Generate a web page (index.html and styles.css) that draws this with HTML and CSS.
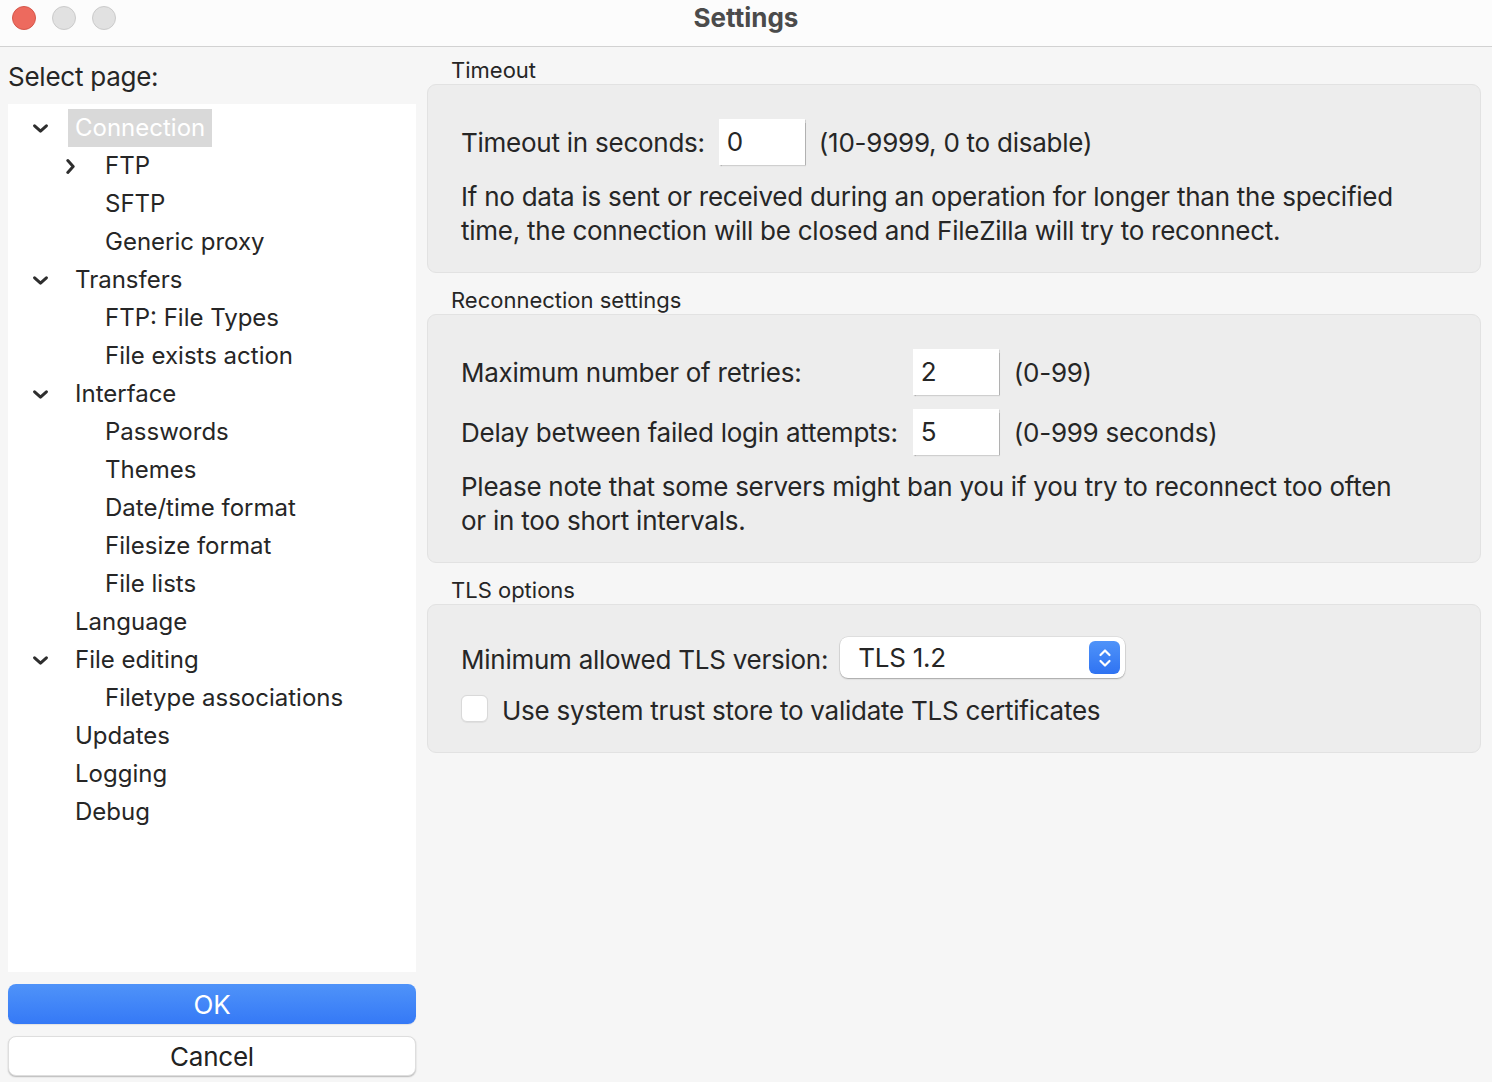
FILE: index.html
```html
<!DOCTYPE html>
<html>
<head>
<meta charset="utf-8">
<title>Settings</title>
<link rel="stylesheet" href="styles.css">
</head>
<body>
<div class="window">
  <div class="titlebar">
    <div class="lights">
      <span class="light red"></span>
      <span class="light grey"></span>
      <span class="light grey"></span>
    </div>
    <div class="title">Settings</div>
  </div>
  <div class="content">
    <div class="sidebar">
      <div class="select-label">Select page:</div>
      <div class="tree">
        <div class="row l0"><span class="tog"><svg viewBox="0 0 14 8" class="chev"><path d="M1.5 1.5 L7 6.5 L12.5 1.5"/></svg></span><span class="lbl sel">Connection</span></div>
        <div class="row l1"><span class="tog"><svg viewBox="0 0 8 14" class="chevr"><path d="M1.5 1.5 L6.5 7 L1.5 12.5"/></svg></span><span class="lbl">FTP</span></div>
        <div class="row l1"><span class="tog"></span><span class="lbl">SFTP</span></div>
        <div class="row l1"><span class="tog"></span><span class="lbl">Generic proxy</span></div>
        <div class="row l0"><span class="tog"><svg viewBox="0 0 14 8" class="chev"><path d="M1.5 1.5 L7 6.5 L12.5 1.5"/></svg></span><span class="lbl">Transfers</span></div>
        <div class="row l1"><span class="tog"></span><span class="lbl">FTP: File Types</span></div>
        <div class="row l1"><span class="tog"></span><span class="lbl">File exists action</span></div>
        <div class="row l0"><span class="tog"><svg viewBox="0 0 14 8" class="chev"><path d="M1.5 1.5 L7 6.5 L12.5 1.5"/></svg></span><span class="lbl">Interface</span></div>
        <div class="row l1"><span class="tog"></span><span class="lbl">Passwords</span></div>
        <div class="row l1"><span class="tog"></span><span class="lbl">Themes</span></div>
        <div class="row l1"><span class="tog"></span><span class="lbl">Date/time format</span></div>
        <div class="row l1"><span class="tog"></span><span class="lbl">Filesize format</span></div>
        <div class="row l1"><span class="tog"></span><span class="lbl">File lists</span></div>
        <div class="row l0"><span class="tog"></span><span class="lbl">Language</span></div>
        <div class="row l0"><span class="tog"><svg viewBox="0 0 14 8" class="chev"><path d="M1.5 1.5 L7 6.5 L12.5 1.5"/></svg></span><span class="lbl">File editing</span></div>
        <div class="row l1"><span class="tog"></span><span class="lbl">Filetype associations</span></div>
        <div class="row l0"><span class="tog"></span><span class="lbl">Updates</span></div>
        <div class="row l0"><span class="tog"></span><span class="lbl">Logging</span></div>
        <div class="row l0"><span class="tog"></span><span class="lbl">Debug</span></div>
      </div>
      <button class="btn ok">OK</button>
      <button class="btn cancel">Cancel</button>
    </div>
    <div class="main">
      <div class="group-label">Timeout</div>
      <div class="group g-timeout">
        <div class="line">
          <span>Timeout in seconds:</span>
          <span class="field">0</span>
          <span>(10-9999, 0 to disable)</span>
        </div>
        <p class="para">If no data is sent or received during an operation for longer than the specified<br>time, the connection will be closed and FileZilla will try to reconnect.</p>
      </div>

      <div class="group-label">Reconnection settings</div>
      <div class="group g-reconnect">
        <div class="grid">
          <span>Maximum number of retries:</span>
          <span class="field">2</span>
          <span>(0-99)</span>
          <span>Delay between failed login attempts:</span>
          <span class="field">5</span>
          <span>(0-999 seconds)</span>
        </div>
        <p class="para">Please note that some servers might ban you if you try to reconnect too often<br>or in too short intervals.</p>
      </div>

      <div class="group-label">TLS options</div>
      <div class="group g-tls">
        <div class="line tls-line">
          <span>Minimum allowed TLS version:</span>
          <span class="select">
            <span class="select-text">TLS 1.2</span>
            <span class="stepper"><svg viewBox="0 0 18 26"><path d="M4.5 10 L9 5.5 L13.5 10"/><path d="M4.5 16 L9 20.5 L13.5 16"/></svg></span>
          </span>
        </div>
        <div class="check-line">
          <span class="checkbox"></span>
          <span>Use system trust store to validate TLS certificates</span>
        </div>
      </div>
    </div>
  </div>
</div>
</body>
</html>
```
FILE: styles.css
```css
* { box-sizing: border-box; }
html, body {
  margin: 0;
  padding: 0;
}
body {
  width: 1492px;
  height: 1082px;
  overflow: hidden;
  background: #f6f6f6;
  font-family: Inter, "Liberation Sans", sans-serif;
  color: #262626;
  font-size: 26px;
  letter-spacing: -0.25px;
}
.window {
  display: flex;
  flex-direction: column;
  height: 1082px;
}
.titlebar {
  height: 47px;
  flex: none;
  background: #fcfcfc;
  border-bottom: 1px solid #d2d2d2;
  position: relative;
  display: flex;
  align-items: center;
  justify-content: center;
}
.lights {
  position: absolute;
  left: 12px;
  top: 6px;
  display: flex;
  gap: 16px;
}
.light {
  width: 24px;
  height: 24px;
  border-radius: 50%;
  display: block;
}
.light.red {
  background: #ed6a5e;
  border: 1px solid #d5574b;
}
.light.grey {
  background: #e1e1e1;
  border: 1px solid #cbcbcb;
}
.title {
  font-weight: 700;
  color: #4b4b4b;
  font-size: 26px;
  letter-spacing: 0;
  margin-top: -12px;
}
.content {
  flex: 1;
  display: flex;
  padding: 0 11px 0 8px;
  gap: 11px;
}
.sidebar {
  width: 408px;
  display: flex;
  flex-direction: column;
}
.select-label {
  padding-top: 14px;
  line-height: 32px;
  height: 57px;
  flex: none;
}
.tree {
  background: #ffffff;
  height: 868px;
  flex: none;
  padding-top: 5px;
  font-size: 24px;
  letter-spacing: 0;
}
.row {
  height: 38px;
  display: flex;
  align-items: center;
}
.row.l0 { padding-left: 20px; }
.row.l1 { padding-left: 50px; }
.tog {
  width: 24px;
  height: 38px;
  display: flex;
  align-items: center;
  justify-content: center;
  margin-right: 16px;
}
.chev { width: 15px; height: 9px; }
.chevr { width: 9px; height: 15px; }
.chev path, .chevr path {
  fill: none;
  stroke: #2e2e2e;
  stroke-width: 2.8;
  stroke-linecap: round;
  stroke-linejoin: round;
}
.lbl {
  padding: 0 7px;
  line-height: 38px;
  white-space: nowrap;
}
.lbl.sel {
  background: #d9d9d9;
  color: #ffffff;
}
.btn {
  font-family: inherit;
  font-size: 26px;
  letter-spacing: -0.25px;
  height: 40px;
  flex: none;
  border-radius: 8px;
  width: 408px;
  padding: 0;
}
.btn.ok {
  margin-top: 12px;
  color: #ffffff;
  border: none;
  background: linear-gradient(#4f93f9, #3579f6);
  box-shadow: 0 1px 1px rgba(0,0,0,0.08);
}
.btn.cancel {
  margin-top: 12px;
  color: #222;
  background: #ffffff;
  border: 1px solid #dedede;
  box-shadow: 0 1px 1.5px rgba(0,0,0,0.25);
}
.main {
  flex: 1;
  display: flex;
  flex-direction: column;
}
.group-label {
  font-size: 22px;
  letter-spacing: 0;
  line-height: 28px;
  padding-left: 24px;
  padding-top: 9px;
}
.group {
  background: #ededed;
  border: 1px solid #e2e2e2;
  border-radius: 9px;
  padding: 34px 33px 24px 33px;
  margin-bottom: 13px;
}
.group + .group-label { padding-top: 0; }
.line {
  display: flex;
  align-items: center;
  height: 46px;
  gap: 14px;
}
.field {
  width: 86px;
  height: 46px;
  background: #ffffff;
  box-shadow: 0.5px 1px 1px rgba(0,0,0,0.25);
  padding-left: 8px;
  line-height: 46px;
  display: block;
}
.para {
  margin: 15px 0 0 0;
  line-height: 34px;
}
.grid {
  display: grid;
  grid-template-columns: max-content 86px max-content;
  grid-template-rows: 46px 46px;
  column-gap: 15px;
  row-gap: 14px;
  align-items: center;
}
.g-tls {
  padding-top: 32px;
  padding-bottom: 27px;
}
.tls-line {
  height: 44px;
  gap: 12px;
}
.select {
  width: 285px;
  height: 41px;
  margin-top: -3px;
  background: #ffffff;
  border-radius: 8px;
  box-shadow: 0 0 0 0.5px rgba(0,0,0,0.12), 0 1px 1.5px rgba(0,0,0,0.25);
  display: flex;
  align-items: center;
  justify-content: space-between;
  padding: 0 5px 0 18px;
}
.stepper {
  width: 31px;
  height: 33px;
  border-radius: 6px;
  background: linear-gradient(#4f93f9, #2f73f2);
  display: flex;
  align-items: center;
  justify-content: center;
}
.stepper svg { width: 18px; height: 26px; }
.stepper path {
  fill: none;
  stroke: #ffffff;
  stroke-width: 2.2;
  stroke-linecap: round;
  stroke-linejoin: round;
}
.check-line {
  margin-top: 14px;
  height: 30px;
  display: flex;
  align-items: center;
  gap: 14px;
}
.checkbox {
  width: 27px;
  height: 27px;
  border-radius: 6px;
  background: #ffffff;
  border: 1px solid #d9d9d9;
  box-shadow: 0 0.5px 1px rgba(0,0,0,0.06);
  display: block;
  margin-top: -3px;
}
```
